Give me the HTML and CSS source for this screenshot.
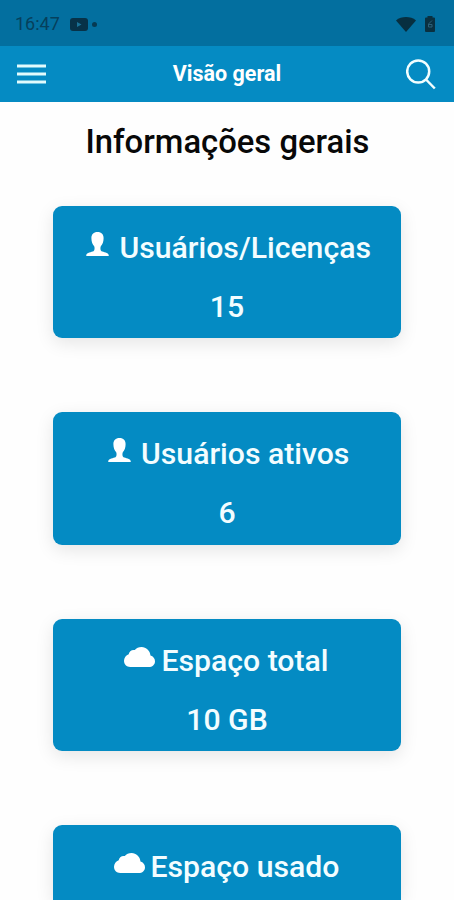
FILE: index.html
```html
<!DOCTYPE html>
<html lang="pt-BR">
<head>
<meta charset="utf-8">
<title>Visão geral</title>
<link rel="stylesheet" href="styles.css">
</head>
<body>
<svg class="defs" aria-hidden="true">
  <symbol id="person" viewBox="0 0 23 24"><path d="M11.500 0C7.500 0 5.400 2.400 5.400 6.200c0 3.700 1.200 6.300 2.800 8.100.6 1.200.6 4.200-.7 5C5.600 20.300.6 20.200.2 23.400c0 .4.200.6.600.6h21.400c.4 0 .6-.2.600-.6-.4-3.200-5.400-3.100-7.300-4.100-1.300-.8-1.300-3.800-.7-5 1.600-1.800 2.800-4.400 2.800-8.100C17.600 2.400 15.500 0 11.500 0z"/></symbol>
  <symbol id="cloud" viewBox="0 0 31 20"><path d="M26.500 8.500C26 3.600 22.200 0 17.600 0c-3 0-5.200 1.100-6.800 3C7.600 2.400 5 4.500 4.700 7.300 2 8.300 0 10.900 0 13.800 0 17.400 2.600 20 6.200 20h18.500c3.600 0 6.300-2.300 6.300-5.800C31 11.600 29.200 9.200 26.500 8.500z"/></symbol>
</svg>
<div class="status">
  <span class="time">16:47</span>
  <svg class="video" viewBox="0 0 18 13"><rect width="18" height="13" rx="3"/><path class="play" d="M7 4l4.500 2.500L7 9z"/></svg>
  <span class="dot"></span>
  <svg class="wifi" viewBox="0 0 20 15"><path d="M0 3.400C5.500-1 14.500-1 20 3.400L10 15z"/></svg>
  <svg class="battery" viewBox="0 0 10 16"><path d="M2.500 0h5v1.500H9q1 0 1 1V15q0 1-1 1H1q-1 0-1-1V2.500q0-1 1-1h1.500z"/><path class="bolt" d="M7 4.500L3.500 8v3h3.500V8.500H4"/></svg>
</div>
<header class="bar">
  <svg class="menu" viewBox="0 0 29 20"><path d="M0 2h29M0 10h29M0 18h29"/></svg>
  <h1 class="title">Visão geral</h1>
  <svg class="search" viewBox="0 0 30 31"><circle cx="12.200" cy="12.500" r="11"/><path d="M20 20.500l8.800 9"/></svg>
</header>
<main class="content">
  <h2 class="heading">Informações gerais</h2>
  <section class="card">
    <div class="label"><svg class="person"><use href="#person"/></svg><span>Usuários/Licenças</span></div>
    <div class="value">15</div>
  </section>
  <section class="card">
    <div class="label"><svg class="person"><use href="#person"/></svg><span>Usuários ativos</span></div>
    <div class="value">6</div>
  </section>
  <section class="card">
    <div class="label"><svg class="cloud"><use href="#cloud"/></svg><span>Espaço total</span></div>
    <div class="value">10 GB</div>
  </section>
  <section class="card last">
    <div class="label"><svg class="cloud"><use href="#cloud"/></svg><span>Espaço usado</span></div>
  </section>
</main>
</body>
</html>
```
FILE: styles.css
```css
* { box-sizing: border-box; }
html, body { height: 900px; overflow: hidden; }
body {
  margin: 0;
  background: #fefefe;
  font-family: Roboto, "Liberation Sans", sans-serif;
}
svg { flex: none; }
.defs { display: none; }
.status {
  height: 46px;
  background: #036f9f;
  color: #06405c;
  display: flex;
  align-items: center;
  padding: 2px 19px 0 15px;
}
.time { font-size: 18px; line-height: 20px; width: 44px; white-space: nowrap; }
.video { width: 18px; height: 13px; margin-left: 11px; fill: #073248; }
.play { fill: #1a7196; }
.dot { width: 5px; height: 5px; border-radius: 50%; background: #063a53; margin-left: 4px; }
.wifi { width: 20px; height: 15px; margin-left: auto; fill: #072f40; }
.battery { width: 10px; height: 16px; margin-left: 9px; fill: #0a3040; }
.bolt { fill: none; stroke: #2c6078; stroke-width: 1; }
.bar {
  height: 56px;
  background: #058bc3;
  color: #fff;
  display: flex;
  align-items: center;
  justify-content: space-between;
  padding: 0 18px 0 17px;
}
.menu { width: 29px; height: 20px; fill: none; stroke: #e2fbfd; stroke-width: 3; }
.title { margin: 0; padding-left: 2px; font-size: 21.500px; font-weight: 700; line-height: 26px; }
.search { width: 30px; height: 31px; fill: none; stroke: #f2feff; stroke-width: 2.500; }
.content {
  height: 798px;
  overflow: hidden;
  display: flex;
  flex-direction: column;
  align-items: center;
}
.heading {
  margin: 20px 0 43.500px;
  padding-left: 1px;
  font-size: 32.800px;
  font-weight: 500;
  line-height: 40px;
  color: #080808;
}
.card {
  flex: none;
  width: 347.500px;
  height: 132.500px;
  margin-bottom: 74px;
  padding-top: 22px;
  border-radius: 9px;
  background: #048bc3;
  color: #f3fdff;
  box-shadow: 0 5px 18px rgba(0, 0, 0, .1);
  font-size: 30.200px;
  font-weight: 500;
  line-height: 40px;
  text-align: center;
}
.card.last {
  flex: 1;
  height: auto;
  margin-bottom: 0;
  border-radius: 9px 9px 0 0;
}
.label { display: flex; justify-content: center; white-space: nowrap; padding-left: 4px; }
.value { margin-top: 19px; }
.person { width: 23px; height: 24px; margin: 4px 10.500px 0 -1px; fill: #fff; }
.cloud { width: 31px; height: 20px; margin: 6px 6px 0 -5px; fill: #fff; }
```
